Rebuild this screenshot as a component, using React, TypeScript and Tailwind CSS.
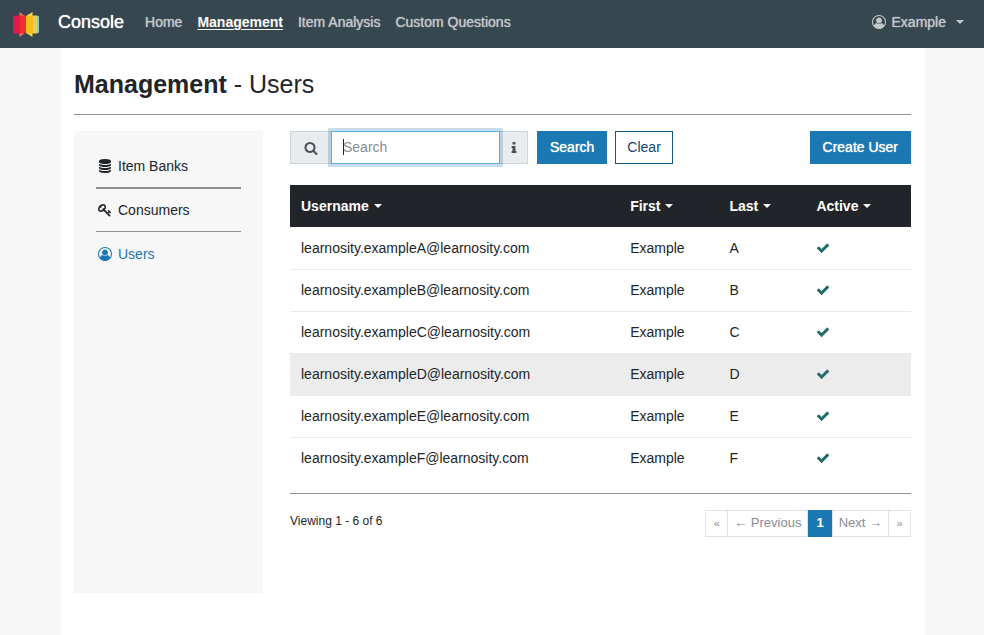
import { useState } from 'react';
import clsx from 'clsx';

const PATHS = {
    search: 'M1216 832q0-185-131.5-316.5t-316.5-131.5-316.5 131.5-131.5 316.5 131.5 316.5 316.5 131.5 316.5-131.5 131.5-316.5zm512 832q0 52-38 90t-90 38q-54 0-90-38l-343-342q-179 124-399 124-143 0-273.5-55.5t-225-150-150-225-55.5-273.5 55.5-273.5 150-225 225-150 273.5-55.5 273.5 55.5 225 150 150 225 55.5 273.5q0 220-124 399l343 343q37 37 37 90z',
    info: 'M1216 1344v128q0 26-19 45t-45 19h-512q-26 0-45-19t-19-45v-128q0-26 19-45t45-19h64v-384h-64q-26 0-45-19t-19-45v-128q0-26 19-45t45-19h384q26 0 45 19t19 45v576h64q26 0 45 19t19 45zm-128-1152v192q0 26-19 45t-45 19h-256q-26 0-45-19t-19-45v-192q0-26 19-45t45-19h256q26 0 45 19t19 45z',
    check: 'M1671 566q0 40-28 68l-724 724-136 136q-28 28-68 28t-68-28l-136-136-362-362q-28-28-28-68t28-68l136-136q28-28 68-28t68 28l294 295 656-657q28-28 68-28t68 28l136 136q28 28 28 68z',
    database: 'M896 768q237 0 443-43t325-127v170q0 69-103 128t-280 93.5-385 34.5-385-34.5-280-93.5-103-128v-170q119 84 325 127t443 43zm0 768q237 0 443-43t325-127v170q0 69-103 128t-280 93.5-385 34.5-385-34.5-280-93.5-103-128v-170q119 84 325 127t443 43zm0-384q237 0 443-43t325-127v170q0 69-103 128t-280 93.5-385 34.5-385-34.5-280-93.5-103-128v-170q119 84 325 127t443 43zm0-1152q208 0 385 34.5t280 93.5 103 128v128q0 69-103 128t-280 93.5-385 34.5-385-34.5-280-93.5-103-128v-128q0-69 103-128t280-93.5 385-34.5z',
    key: 'M832 512q0-80-56-136t-136-56-136 56-56 136q0 42 19 83-41-19-83-19-80 0-136 56t-56 136 56 136 136 56 136-56 56-136q0-42-19-83 41 19 83 19 80 0 136-56t56-136zm851 704q0 17-49 66t-66 49q-9 0-28.5-16t-36.5-33-38.5-40-24.5-26l-96 96 220 220q28 28 28 68 0 42-39 81t-81 39q-40 0-68-28l-671-671q-176 131-365 131-163 0-265.5-102.5t-102.5-265.5q0-160 95-313t248-248 313-95q163 0 265.5 102.5t102.5 265.5q0 189-131 365l355 355 96-96q-3-3-26-24.5t-40-38.5-33-36.5-16-28.5q0-17 49-66t66-49q13 0 23 10 6 6 46 44.5t82 79.5 86.5 86 73 78 28.5 41z',
    user: 'M896 0q182 0 348 71t286 191 191 286 71 348q0 181-70.5 347t-190.5 286-286 191.5-349 71.5-349-71-285.5-191.5-190.5-286-71-347.5 71-348 191-286 286-191 348-71zm619 1351q149-205 149-455 0-156-61-298t-164-245-245-164-298-61-298 61-245 164-164 245-61 298q0 250 149 455 66-327 306-327 131 128 313 128t313-128q240 0 306 327zm-235-647q0-159-112.5-271.5t-271.5-112.5-271.5 112.5-112.5 271.5 112.5 271.5 271.5 112.5 271.5-112.5 112.5-271.5z',
};

const Icon = ({ name, className }: { name: keyof typeof PATHS, className?: string }) => (
    <svg viewBox="0 0 1792 1792" fill="currentColor" aria-hidden="true" className={clsx('shrink-0', className)}>
        <path d={PATHS[name]} />
    </svg>
);

const Caret = () => (
    <svg viewBox="0 0 8 4" fill="currentColor" aria-hidden="true" className="h-1 w-2 shrink-0">
        <path d="M0 0h8L4 4z" />
    </svg>
);

// Open book: two light pages behind, coloured covers in front
const Logo = () => (
    <svg viewBox="0 0 26 30" aria-hidden="true" className="h-[30px] w-[26px] shrink-0">
        <path d="M6.5 5L12 9v17l-5.5 4z" fill="#f0716e" />
        <path d="M19.5 5L13 9v17l6.500 4z" fill="#fad84a" />
        <path d="M0 9.500L1.500 8.500H7v18H1.500L0 25.500z" fill="#e6194b" />
        <path d="M7 8.500h4.500L13 10v15l-1.500 1.500H7z" fill="#ef2f35" />
        <path d="M13 10l1.500-1.500h5.500v18h-5.500L13 25z" fill="#f5bf1a" />
        <path d="M20 8.500h4v18h-4z" fill="#dfd064" />
        <path d="M24 8.500l2 1v16l-2 1z" fill="#84cfc8" />
    </svg>
);

const navLinks = ['Home', 'Management', 'Item Analysis', 'Custom Questions'];

const columns = [
    { label: 'Username', width: 'w-[53%]' },
    { label: 'First', width: 'w-[16%]' },
    { label: 'Last', width: 'w-[14%]' },
    { label: 'Active', width: 'w-[17%]' },
];

const users = ['A', 'B', 'C', 'D', 'E', 'F'].map(last => ({
    username: `learnosity.example${last}@learnosity.com`,
    first: 'Example',
    last,
}));

const primaryButton = 'h-[33px] bg-[#1b78b3] px-[13px] pb-px text-white [text-shadow:0_0_1px_#fff]';
const pageLink = 'flex h-[27px] items-center border border-[#dee2e6] px-[6px] text-[#868e96]';
const pageEdge = 'flex h-[27px] w-[23px] items-center justify-center border border-[#dee2e6] text-[11px] text-[#868e96]';

export default function App() {
    const [query, setQuery] = useState('');
    const [selected, setSelected] = useState('D');

    return (
        <div className="flex min-h-screen flex-col bg-[#f7f7f7] font-['Helvetica_Neue','Liberation_Sans',sans-serif] text-sm text-[#212529]">
            <header className="flex h-12 items-center bg-[#37474f] pr-5 pb-1 pl-[13px]">
                <Logo />
                <a href="#" className="ml-[19px] text-lg text-white [text-shadow:0_0_1px_#fff]">Console</a>
                <nav className="ml-[21px] flex gap-[15px] whitespace-nowrap">
                    {navLinks.map(link => (
                        <a
                            key={link}
                            href="#"
                            className={link === 'Management'
                                ? 'font-bold text-white underline underline-offset-2'
                                : 'text-[#c3c8ca] [text-shadow:0_0_1px_#c3c8ca]'}
                        >
                            {link}
                        </a>
                    ))}
                </nav>
                <button className="ml-auto flex items-center text-[#c3c8ca] [text-shadow:0_0_1px_#c3c8ca]">
                    <Icon name="user" className="mr-[6px] size-[14px]" />
                    <span className="mr-[10px]">Example</span>
                    <Caret />
                </button>
            </header>

            <div className="flex grow flex-col pr-[59px] pl-[61px]">
                <main className="grow bg-white pr-[14px] pl-[13px]">
                    <h1 className="border-b border-[#8f8f8f] pt-5 pb-[14px] text-[25px] leading-8">
                        <strong>Management</strong> - Users
                    </h1>

                    <div className="mt-4 flex gap-[27px]">
                        <aside className="min-h-[462px] w-[189px] shrink-0 bg-[#f7f7f7] px-[22px] pt-[14px]">
                            <a href="#" className="flex h-11 items-center gap-[6px] border-b-2 border-[#8f9091]">
                                <Icon name="database" className="ml-[2px] size-[14px]" />
                                Item Banks
                            </a>
                            <a href="#" className="flex h-[43px] items-center gap-[6px] border-b border-[#8f9091]">
                                <Icon name="key" className="ml-[2px] size-[14px]" />
                                Consumers
                            </a>
                            <a href="#" className="flex h-[43px] items-center gap-[6px] text-[#1b78b3]">
                                <Icon name="user" className="ml-[2px] size-[14px]" />
                                Users
                            </a>
                        </aside>

                        <section className="min-w-0 grow">
                            <form className="flex" onSubmit={e => e.preventDefault()}>
                                <div className="flex h-[33px]">
                                    <label htmlFor="search" aria-label="Search" className="flex w-[41px] items-center justify-center border border-r-0 border-[#ced4da] bg-[#e9ecef] text-[#495057]">
                                        <Icon name="search" className="size-[14px]" />
                                    </label>
                                    <div className="relative z-10 flex">
                                        <input
                                            id="search"
                                            type="text"
                                            value={query}
                                            onChange={e => setQuery(e.target.value)}
                                            placeholder="Search"
                                            className="w-[169px] border border-[#62aee0] bg-white px-[11px] pb-[2px] shadow-[0_0_0_3px_#1b78b340] outline-none placeholder:text-[#868e96]"
                                        />
                                        {!query && <span className="absolute top-2 left-3 h-4 w-px bg-[#212529]" />}
                                    </div>
                                    <button type="button" aria-label="Search help" className="flex w-7 items-center justify-center border border-l-0 border-[#ced4da] bg-[#e9ecef] text-[#495057]">
                                        <Icon name="info" className="size-[14px]" />
                                    </button>
                                </div>
                                <button type="submit" className={clsx(primaryButton, 'ml-[9px]')}>Search</button>
                                <button type="button" onClick={() => setQuery('')} className="ml-2 h-[33px] border border-[#12578a] bg-white px-[11px] pb-px text-[#12456b]">
                                    Clear
                                </button>
                                <button type="button" className={clsx(primaryButton, 'ml-auto')}>Create User</button>
                            </form>

                            <table className="mt-[21px] w-full table-fixed text-left">
                                <thead className="bg-[#212529] text-white">
                                    <tr className="h-[42px]">
                                        {columns.map(({ label, width }) => (
                                            <th key={label} className={clsx('px-[11px]', width)}>
                                                <button className="flex items-center gap-[5px] font-bold">
                                                    {label}
                                                    <Caret />
                                                </button>
                                            </th>
                                        ))}
                                    </tr>
                                </thead>
                                <tbody>
                                    {users.map(user => (
                                        <tr
                                            key={user.last}
                                            onClick={() => setSelected(user.last)}
                                            className={clsx('h-[42px] border-b border-[#e9ecef] last:border-b-0', selected === user.last && 'bg-[#ececec]')}
                                        >
                                            <td className="px-[11px]">{user.username}</td>
                                            <td className="px-[11px]">{user.first}</td>
                                            <td className="px-[11px]">{user.last}</td>
                                            <td className="px-[11px]"><Icon name="check" className="size-[14px] text-[#226b68]" /></td>
                                        </tr>
                                    ))}
                                </tbody>
                            </table>

                            <div className="mt-[14px] flex items-start justify-between border-t border-[#8f8f8f] pt-4">
                                <p className="pt-[3px] text-xs">Viewing 1 - 6 of 6</p>
                                <nav aria-label="Pagination" className="flex text-[13px]">
                                    <a href="#" aria-label="First page" className={pageEdge}>«</a>
                                    <a href="#" className={clsx(pageLink, '-ml-px')}>← Previous</a>
                                    <a href="#" aria-current="page" className="flex h-[27px] items-center bg-[#1b78b3] px-2 font-bold text-white">1</a>
                                    <a href="#" className={pageLink}>Next →</a>
                                    <a href="#" aria-label="Last page" className={clsx(pageEdge, '-ml-px')}>»</a>
                                </nav>
                            </div>
                        </section>
                    </div>
                </main>
            </div>
        </div>
    );
}
